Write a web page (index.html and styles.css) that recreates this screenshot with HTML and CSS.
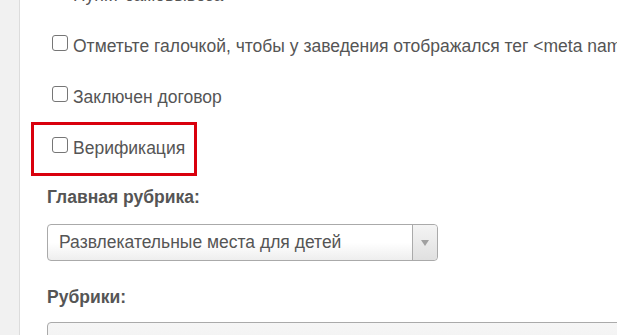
FILE: index.html
```html
<!DOCTYPE html>
<html lang="ru">
<head>
<meta charset="utf-8">
<title>Form</title>
<link rel="stylesheet" href="styles.css">
</head>
<body>
<div class="layout">
  <aside class="sidebar"></aside>
  <main class="content">
    <div class="check-row"><label class="check"><input type="checkbox" class="box"><span>Пункт самовывоза</span></label></div>
    <div class="check-row"><label class="check"><input type="checkbox" class="box"><span>Отметьте галочкой, чтобы у заведения отображался тег &lt;meta name="robots" content="noindex"&gt;</span></label></div>
    <div class="check-row"><label class="check"><input type="checkbox" class="box"><span>Заключен договор</span></label></div>
    <div class="check-row"><label class="check highlight"><input type="checkbox" class="box"><span>Верификация</span></label></div>
    <div class="field-label label-main">Главная рубрика:</div>
    <div class="select">
      <span class="select-text">Развлекательные места для детей</span>
      <span class="select-arrow"><svg width="8" height="6" viewBox="0 0 8 6"><path d="M0 0H8L4 6Z" fill="#a0a0a0"/></svg></span>
    </div>
    <div class="field-label label-rubrics">Рубрики:</div>
    <div class="multi"></div>
  </main>
</div>
</body>
</html>
```
FILE: styles.css
```css
html, body {
  margin: 0;
  padding: 0;
  background: #fff;
  overflow: hidden;
}
body {
  font-family: "Liberation Sans", Arial, sans-serif;
  font-size: 17.5px;
  color: #555;
}
.layout {
  display: flex;
  height: 335px;
  overflow: hidden;
}
.sidebar {
  width: 19px;
  flex: none;
  background: #f1f1f1;
  border-right: 1px solid #dcdcdc;
}
.content {
  flex: 1;
  min-width: 0;
  padding-left: 27px;
  margin-top: -34px;
}
.check-row {
  height: 51px;
  display: flex;
  align-items: center;
  padding-left: 5px;
  white-space: nowrap;
}
.check {
  display: inline-flex;
  align-items: center;
  gap: 5px;
  line-height: 20px;
}
.box {
  appearance: none;
  -webkit-appearance: none;
  width: 16px;
  height: 16px;
  margin: 0;
  border: 1px solid #767676;
  border-radius: 3px;
  background: #fff;
  flex: none;
}
.check span {
  position: relative;
  top: 3px;
}
.highlight {
  position: relative;
}
.highlight::before {
  content: "";
  position: absolute;
  left: -21px;
  right: -12px;
  top: -13px;
  bottom: -21px;
  border: 3px solid #d9000d;
}
.field-label {
  font-weight: bold;
  line-height: 20px;
}
.label-main {
  margin-top: 17px;
}
.select {
  margin-top: 17px;
  width: 389px;
  height: 35px;
  border: 1px solid #aaa;
  border-radius: 4px;
  background: linear-gradient(#fff 0%, #fff 50%, #eee 100%);
  display: flex;
  align-items: center;
  box-sizing: content-box;
}
.select-text {
  flex: 1;
  padding-left: 11px;
}
.select-arrow {
  width: 24px;
  height: 35px;
  border-left: 1px solid #aaa;
  display: flex;
  align-items: center;
  justify-content: center;
  background: linear-gradient(#f4f4f4, #e0e0e0);
  border-radius: 0 4px 4px 0;
}
.label-rubrics {
  margin-top: 26px;
}
.multi {
  margin-top: 15px;
  height: 40px;
  border: 1px solid #aaa;
  border-radius: 4px 0 0 0;
  background: linear-gradient(#f6f6f6, #eee);
  margin-right: -10px;
}
```
